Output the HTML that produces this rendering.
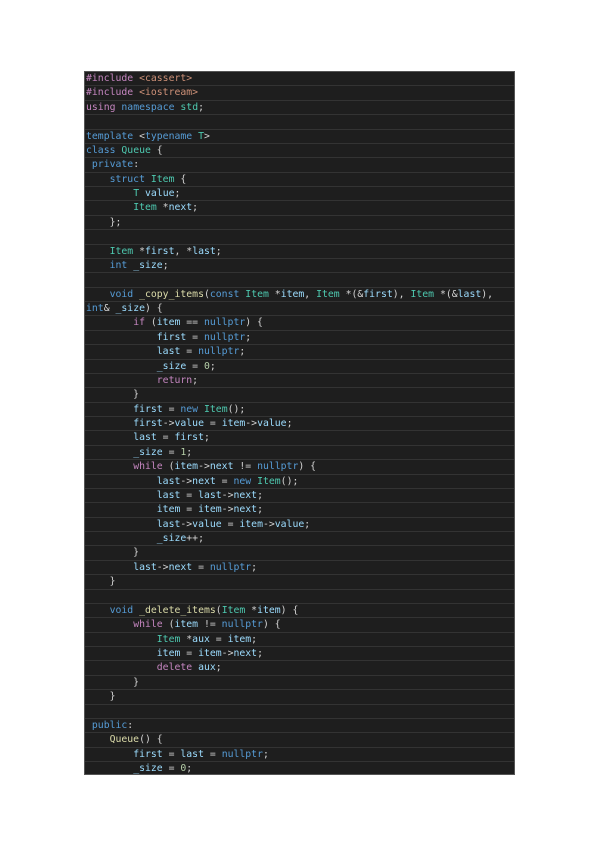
<!DOCTYPE html>
<html><head><meta charset="utf-8"><style>
html,body{margin:0;padding:0;background:#fff;width:600px;height:848px;overflow:hidden}
.box{position:absolute;left:84px;top:71px;width:431px;height:704px;background:#1e1e1e;border:1px solid #555;box-sizing:border-box;padding-top:0px}
.l{height:14.375px;line-height:14.375px;font-family:"DejaVu Sans Mono","Liberation Mono",monospace;font-size:9.8px;color:#d4d4d4;white-space:pre;padding-left:1px;border-bottom:1px solid #333;box-sizing:border-box}
.k{color:#569cd6}.c{color:#c586c0}.t{color:#4ec9b0}.v{color:#9cdcfe}.f{color:#dcdcaa}.s{color:#ce9178}.n{color:#b5cea8}
</style></head><body><div class="box">
<div class="l"><span class="c">#include</span> <span class="s">&lt;cassert&gt;</span></div>
<div class="l"><span class="c">#include</span> <span class="s">&lt;iostream&gt;</span></div>
<div class="l"><span class="c">using</span> <span class="k">namespace</span> <span class="t">std</span>;</div>
<div class="l"> </div>
<div class="l"><span class="k">template</span> &lt;<span class="k">typename</span> <span class="t">T</span>&gt;</div>
<div class="l"><span class="k">class</span> <span class="t">Queue</span> {</div>
<div class="l"> <span class="k">private</span>:</div>
<div class="l">    <span class="k">struct</span> <span class="t">Item</span> {</div>
<div class="l">        <span class="t">T</span> <span class="v">value</span>;</div>
<div class="l">        <span class="t">Item</span> *<span class="v">next</span>;</div>
<div class="l">    };</div>
<div class="l"> </div>
<div class="l">    <span class="t">Item</span> *<span class="v">first</span>, *<span class="v">last</span>;</div>
<div class="l">    <span class="k">int</span> <span class="v">_size</span>;</div>
<div class="l"> </div>
<div class="l">    <span class="k">void</span> <span class="f">_copy_items</span>(<span class="k">const</span> <span class="t">Item</span> *<span class="v">item</span>, <span class="t">Item</span> *(&amp;<span class="v">first</span>), <span class="t">Item</span> *(&amp;<span class="v">last</span>),</div>
<div class="l"><span class="k">int</span>&amp; <span class="v">_size</span>) {</div>
<div class="l">        <span class="c">if</span> (<span class="v">item</span> == <span class="k">nullptr</span>) {</div>
<div class="l">            <span class="v">first</span> = <span class="k">nullptr</span>;</div>
<div class="l">            <span class="v">last</span> = <span class="k">nullptr</span>;</div>
<div class="l">            <span class="v">_size</span> = <span class="n">0</span>;</div>
<div class="l">            <span class="c">return</span>;</div>
<div class="l">        }</div>
<div class="l">        <span class="v">first</span> = <span class="k">new</span> <span class="t">Item</span>();</div>
<div class="l">        <span class="v">first</span>-&gt;<span class="v">value</span> = <span class="v">item</span>-&gt;<span class="v">value</span>;</div>
<div class="l">        <span class="v">last</span> = <span class="v">first</span>;</div>
<div class="l">        <span class="v">_size</span> = <span class="n">1</span>;</div>
<div class="l">        <span class="c">while</span> (<span class="v">item</span>-&gt;<span class="v">next</span> != <span class="k">nullptr</span>) {</div>
<div class="l">            <span class="v">last</span>-&gt;<span class="v">next</span> = <span class="k">new</span> <span class="t">Item</span>();</div>
<div class="l">            <span class="v">last</span> = <span class="v">last</span>-&gt;<span class="v">next</span>;</div>
<div class="l">            <span class="v">item</span> = <span class="v">item</span>-&gt;<span class="v">next</span>;</div>
<div class="l">            <span class="v">last</span>-&gt;<span class="v">value</span> = <span class="v">item</span>-&gt;<span class="v">value</span>;</div>
<div class="l">            <span class="v">_size</span>++;</div>
<div class="l">        }</div>
<div class="l">        <span class="v">last</span>-&gt;<span class="v">next</span> = <span class="k">nullptr</span>;</div>
<div class="l">    }</div>
<div class="l"> </div>
<div class="l">    <span class="k">void</span> <span class="f">_delete_items</span>(<span class="t">Item</span> *<span class="v">item</span>) {</div>
<div class="l">        <span class="c">while</span> (<span class="v">item</span> != <span class="k">nullptr</span>) {</div>
<div class="l">            <span class="t">Item</span> *<span class="v">aux</span> = <span class="v">item</span>;</div>
<div class="l">            <span class="v">item</span> = <span class="v">item</span>-&gt;<span class="v">next</span>;</div>
<div class="l">            <span class="c">delete</span> <span class="v">aux</span>;</div>
<div class="l">        }</div>
<div class="l">    }</div>
<div class="l"> </div>
<div class="l"> <span class="k">public</span>:</div>
<div class="l">    <span class="f">Queue</span>() {</div>
<div class="l">        <span class="v">first</span> = <span class="v">last</span> = <span class="k">nullptr</span>;</div>
<div class="l" style="border-bottom:none">        <span class="v">_size</span> = <span class="n">0</span>;</div>
</div></body></html>
